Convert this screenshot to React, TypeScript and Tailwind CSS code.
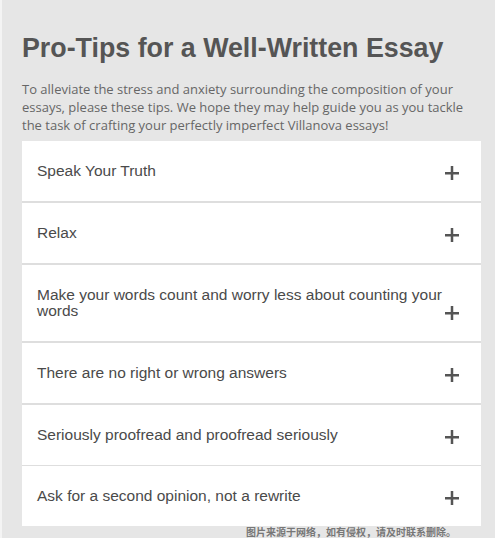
const tips = [
  "Speak Your Truth",
  "Relax",
  "Make your words count and worry less about counting your words",
  "There are no right or wrong answers",
  "Seriously proofread and proofread seriously",
  "Ask for a second opinion, not a rewrite",
];

function Plus() {
  return (
    <svg width="16" height="16" viewBox="0 0 16 16" className="absolute bottom-[20px] right-[21px]">
      <rect x="1" y="7" width="14" height="2.5" fill="#555" />
      <rect x="6.75" y="1" width="2.5" height="14" fill="#555" />
    </svg>
  );
}

export default function App() {
  return (
    <div className="relative h-[538px] w-[495px] overflow-hidden border-l-2 border-[#f4f4f4] bg-[#e6e6e6] pl-[20px] pr-[14px] pt-[33px]">
      <h1 className="font-['Liberation_Sans',Arial,sans-serif] text-[26.8px] leading-[30px] font-bold text-[#555]">
        Pro-Tips for a Well-Written Essay
      </h1>
      <p className="mt-[17px] font-['Open_Sans',sans-serif] text-[13px] leading-[18px] text-[#666]">
        To alleviate the stress and anxiety surrounding the composition of your essays, please these tips.
        We hope they may help guide you as you tackle the task of crafting your perfectly imperfect
        Villanova essays!
      </p>
      <div className="mt-[7px] flex flex-col bg-white">
        {tips.map((t, i) => (
          <div
            key={i}
            className={
              i === tips.length - 1
                ? "relative py-[22px] pl-[15px] pr-[12px]"
                : i === tips.length - 2
                ? "relative border-b border-[#dedede] py-[22px] pl-[15px] pr-[12px]"
                : "relative border-b-2 border-[#dedede] py-[22px] pl-[15px] pr-[12px]"
            }
          >
            <div className="font-['Liberation_Sans',Arial,sans-serif] text-[15.5px] leading-[16px] text-[#4a4a4a]">
              {t}
            </div>
            <Plus />
          </div>
        ))}
      </div>
      <div className="absolute left-[244px] top-[526px] font-['Noto_Sans_CJK_SC',sans-serif] text-[10px] leading-[12px] font-bold text-[#777]">
        图片来源于网络，如有侵权，请及时联系删除。
      </div>
    </div>
  );
}
